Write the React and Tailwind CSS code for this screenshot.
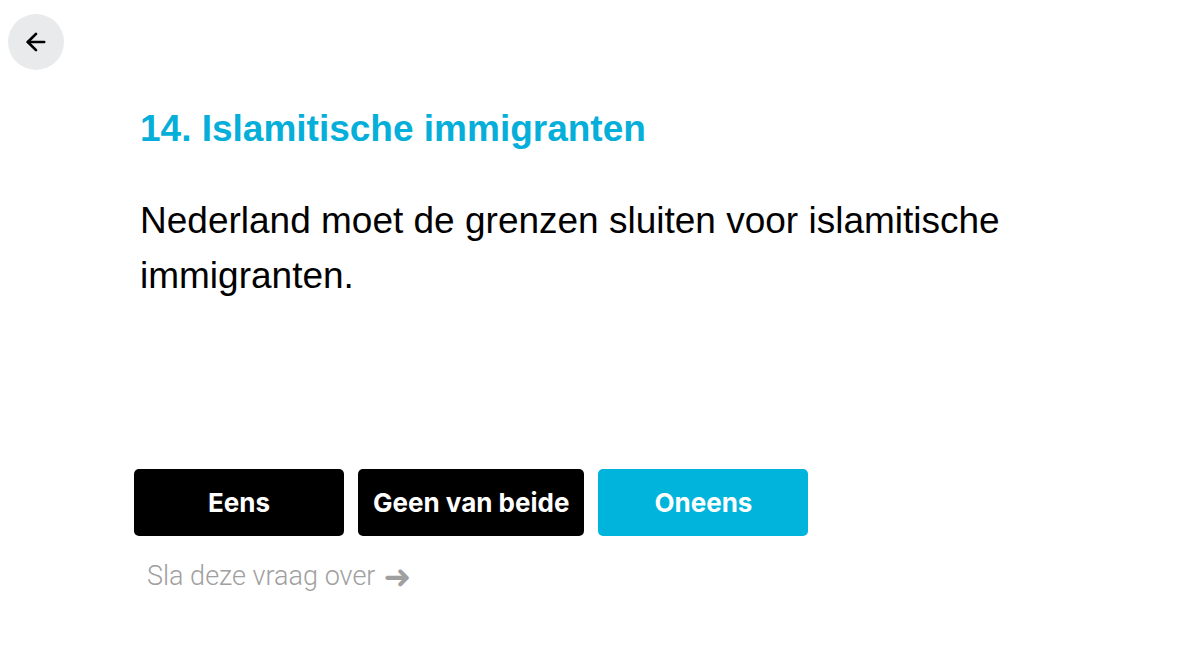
import React from 'react';
import { ArrowLeft } from 'lucide-react';

const answers = [
  { label: 'Eens', className: 'bg-black' },
  { label: 'Geen van beide', className: 'bg-black' },
  { label: 'Oneens', className: 'bg-[#00b4dc]' },
];

const App = () => {
  return (
    <div className="min-h-screen w-full bg-white font-['Liberation_Sans',Arial,sans-serif]">
      <div className="pl-2 pt-[14px]">
        <button className="flex h-14 w-14 items-center justify-center rounded-full bg-[#e8eaeb] text-black">
          <ArrowLeft size={28} strokeWidth={2.3} />
        </button>
      </div>

      <div className="ml-[140px] mt-[37px] max-w-[920px]">
        <h1 className="text-[37px] font-bold leading-[44px] text-[#05afd9]">
          14. Islamitische immigranten
        </h1>
        <p className="mt-[42px] text-[37px] leading-[55px] text-black">
          Nederland moet de grenzen sluiten voor islamitische immigranten.
        </p>
      </div>

      <div className="ml-[134px] mt-[166px]">
        <div className="flex gap-[14px]">
          {answers.map((a) => (
            <button
              key={a.label}
              className={`h-[67px] min-w-[210px] rounded-[5px] px-[15px] font-['Inter',sans-serif] text-[26px] font-bold text-white ${a.className}`}
            >
              {a.label}
            </button>
          ))}
        </div>
        <div className="mt-[20px] flex items-center gap-[8px] pl-[13px] font-['Roboto',sans-serif] text-[27px] font-light text-[#a0a0a0]">
          <span>Sla deze vraag over</span>
          <span className="font-['DejaVu_Sans',sans-serif] text-[33px] font-bold leading-none">➜</span>
        </div>
      </div>
    </div>
  );
};

export default App;
